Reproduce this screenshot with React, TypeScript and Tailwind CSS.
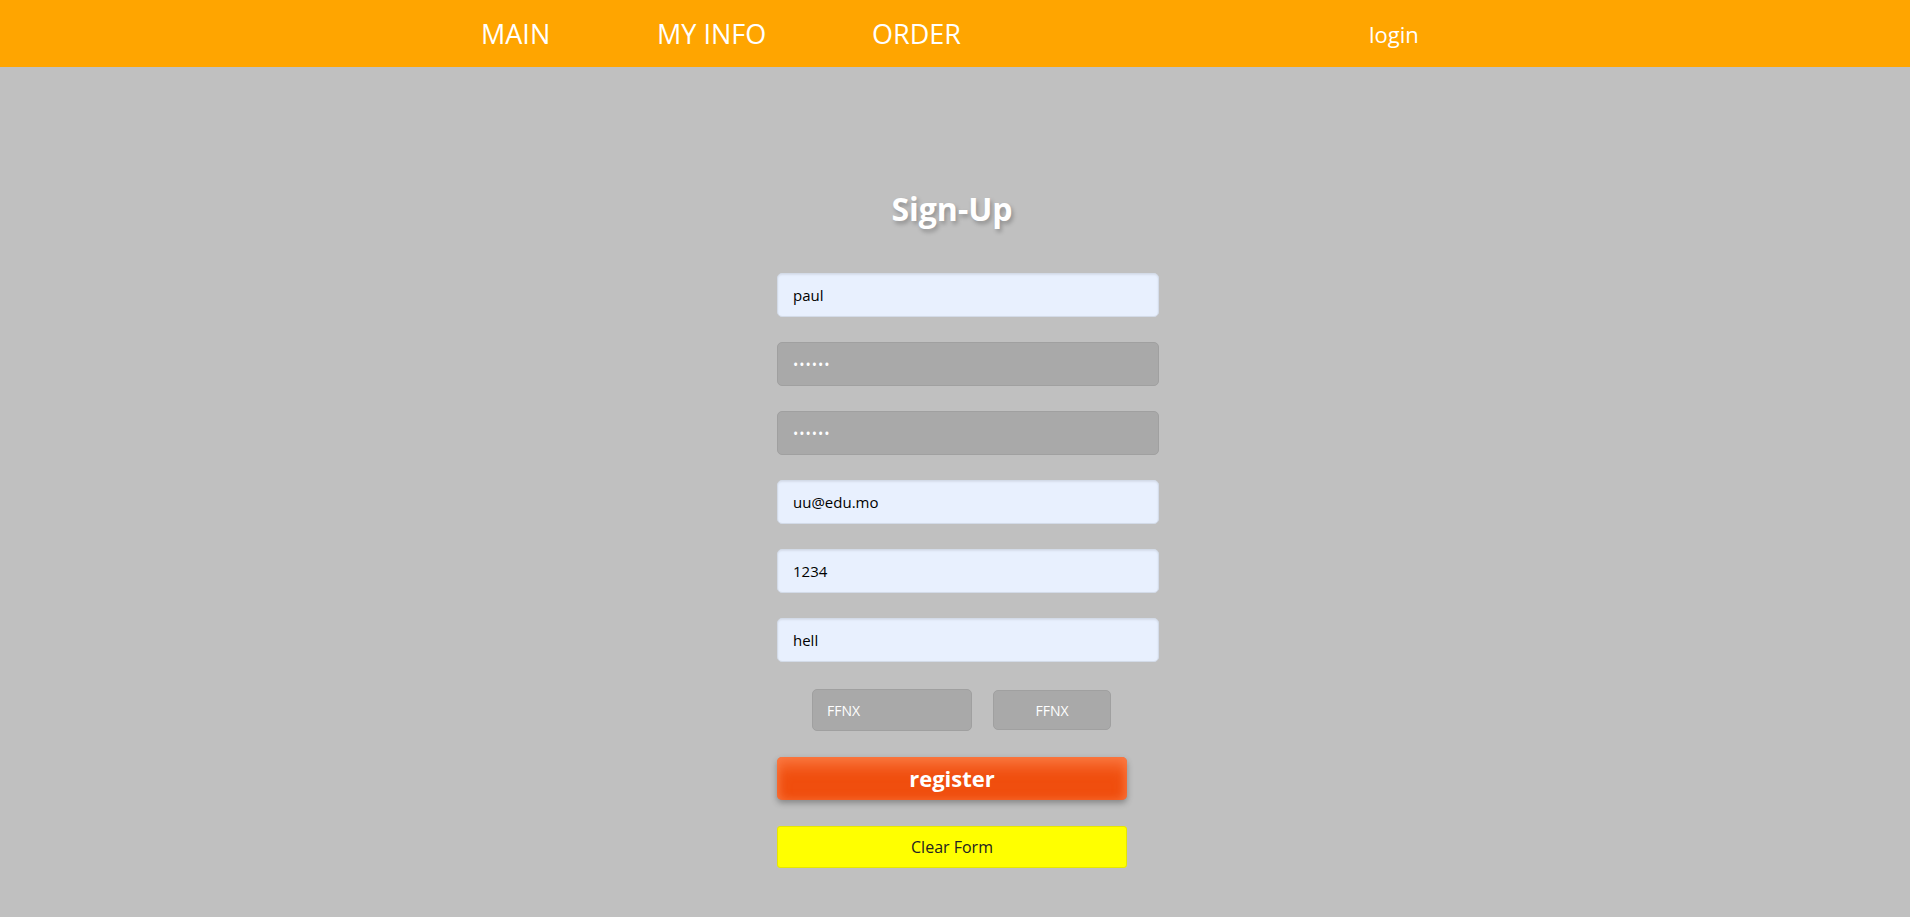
import { useState } from 'react'

const font = 'font-["Open_Sans","Noto_Sans",sans-serif]'

function Field({ value, type = 'text', filled = true }: { value: string; type?: string; filled?: boolean }) {
  const [v, setV] = useState(value)
  return (
    <input
      type={type}
      value={v}
      onChange={e => setV(e.target.value)}
      className={
        filled
          ? 'h-[44px] w-[382px] rounded-[5px] border border-[#d3dbe8] bg-[#e8f0fe] pl-[15px] text-[15px] text-black shadow-[inset_0_1px_2px_rgba(0,0,0,0.08)] outline-none'
          : 'h-[44px] w-[382px] rounded-[5px] border border-[#a0a0a0] bg-[#a9a9a9] pl-[15px] text-[14px] tracking-[1px] text-white outline-none'
      }
    />
  )
}

function App() {
  return (
    <div className={`min-h-[930px] bg-[#c0c0c0] ${font}`}>
      <header className="flex h-[67px] items-center bg-[#ffa500] pl-[481px] text-white">
        <a className="w-[176px] text-[27px] leading-none">MAIN</a>
        <a className="w-[215px] text-[27px] leading-none">MY INFO</a>
        <a className="w-[497px] text-[27px] leading-none">ORDER</a>
        <a className="text-[22px] leading-none">login</a>
      </header>

      <div className="pr-[6px]">
        <main className="mx-auto flex w-[350px] flex-col pt-[122px]">
          <h1 className="text-center text-[32px] font-bold leading-[40px] text-white [text-shadow:2px_3px_4px_rgba(0,0,0,0.25)]">
            Sign-Up
          </h1>

          <div className="mt-[44px] flex flex-col gap-[25px]">
            <Field value="paul" />
            <Field value="123456" type="password" filled={false} />
            <Field value="123456" type="password" filled={false} />
            <Field value="uu@edu.mo" />
            <Field value="1234" />
            <Field value="hell" />
          </div>

          <div className="mt-[27px] flex items-center gap-[21px] pl-[35px]">
            <input
              defaultValue="FFNX"
              className="h-[42px] w-[160px] rounded-[5px] border border-[#a0a0a0] bg-[#a9a9a9] pl-[14px] text-[14px] text-white outline-none"
            />
            <button className="h-[40px] w-[118px] rounded-[5px] border border-[#a0a0a0] bg-[#a9a9a9] text-[14px] text-white">
              FFNX
            </button>
          </div>

          <button className="mt-[26px] h-[43px] w-[350px] rounded-[5px] bg-[#f04e0e] text-[22px] font-bold text-white shadow-[inset_0_10px_14px_rgba(255,140,90,0.55),inset_0_0_10px_rgba(255,140,90,0.5),0_3px_6px_rgba(0,0,0,0.3)]">
            register
          </button>

          <button className="mt-[26px] h-[42px] w-[350px] rounded-[3px] border border-[#e6e600] bg-[#ffff00] text-[16px] text-[#222]">
            Clear Form
          </button>
        </main>
      </div>
    </div>
  )
}

export default App
